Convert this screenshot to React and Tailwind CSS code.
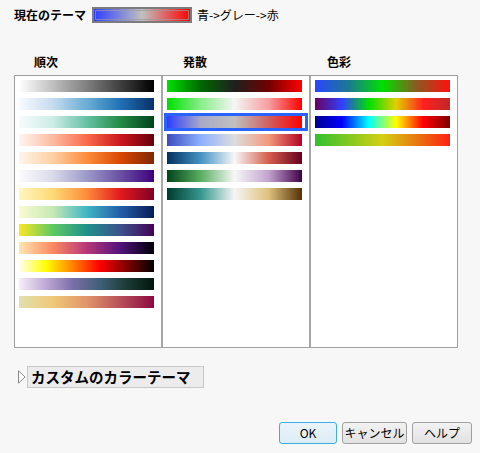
const SEQUENTIAL = [
  'linear-gradient(to right, #ffffff, #000000)',
  'linear-gradient(to right, #f7fbff, #c6dbef, #6baed6, #2171b5, #08306b)',
  'linear-gradient(to right, #f7fcfd, #ccece6, #66c2a4, #238b45, #00441b)',
  'linear-gradient(to right, #fff5f0, #fcbba1, #fb6a4a, #cb181d, #67000d)',
  'linear-gradient(to right, #fff5eb, #fdd0a2, #fd8d3c, #d94801, #7f2704)',
  'linear-gradient(to right, #fcfbfd, #dadaeb, #9e9ac8, #6a51a3, #3f007d)',
  'linear-gradient(to right, #fff6c0, #fed976, #fd8d3c, #e31a1c, #800026)',
  'linear-gradient(to right, #f8fcd0, #c7e9b4, #41b6c4, #225ea8, #081d58)',
  'linear-gradient(to right, #fde725, #5ec962, #21918c, #3b528b, #440154)',
  'linear-gradient(to right, #fee6b0, #fc8961, #b73779, #51127c, #000004)',
  'linear-gradient(to right, #fffff0, #ffff00, #ff8000, #ff0000, #800000, #000000)',
  'linear-gradient(to right, #f6eef8, #c0a8d6, #7a6ea8, #3f6078, #1c3a34, #02150e)',
  'linear-gradient(to right, #e0e0b0, #f0c878, #e0956a, #b85058, #8b0a40)',
]

const DIVERGING = [
  'linear-gradient(to right, #00e000, #006800, #202020, #700000, #ff0000)',
  'linear-gradient(to right, #00e000, #88ee88, #f5f5f5, #f5a0a0, #ff0000)',
  'linear-gradient(to right, #2e3fff, #a8a8c8, #c0c0c0, #d06060, #ff0000)',
  'linear-gradient(to right, #3b4cc0, #8db0fe, #dddddd, #f49a7b, #b40426)',
  'linear-gradient(to right, #053061, #4393c3, #f7f7f7, #d6604d, #67001f)',
  'linear-gradient(to right, #00441b, #5aae61, #f7f7f7, #c2a5cf, #40004b)',
  'linear-gradient(to right, #003c30, #35978f, #f5f5f5, #dfc27d, #543005)',
]

const COLORFUL = [
  'linear-gradient(to right, #2b45ff, #1a7a90, #00e000, #8a5a20, #ff1010)',
  'linear-gradient(to right, #6a0060, #3040ff, #00e000, #e0d000, #ff2020, #c02828)',
  'linear-gradient(to right, #00008f, #0000ff, #00ffff, #ffff00, #ff0000, #800000)',
  'linear-gradient(to right, #30c030, #d4d010, #ff2010)',
]

function Column({ bars, selected, border }) {
  return (
    <div
      className={`h-full pl-[4px] pt-[4px] flex flex-col gap-[6px] ${
        border ? 'w-[148px] border-r-2 border-[#a8a8a8]' : 'w-[146px]'
      }`}
    >
      {bars.map((g, i) => (
        <div key={i} className="relative w-[135px] h-[12px] shrink-0">
          {selected === i && (
            <span className="absolute left-[-3px] top-[-3px] w-[144px] h-[18px] border-[3px] border-[#2962ff]" />
          )}
          <div className="absolute inset-0" style={{ background: g }} />
        </div>
      ))}
    </div>
  )
}

function Button({ children, width, focused }) {
  return (
    <button
      className={`h-[22px] ${width} px-0 whitespace-nowrap rounded-[3px] border text-[12px] leading-none text-black bg-gradient-to-b ${
        focused ? 'border-[#3ab0e2] from-[#ebf4fa] to-[#dcecf6]' : 'border-[#a0a0a0] from-[#f2f2f2] to-[#e2e2e2]'
      }`}
    >
      {children}
    </button>
  )
}

export default function App() {
  return (
    <div
      className="w-[480px] h-[453px] bg-[#f7f7f7] text-black relative"
      style={{ fontFamily: '"Noto Sans CJK JP", "Noto Sans", sans-serif' }}
    >
      <div className="flex items-center pl-[14px] pt-[7px] h-[23px]">
        <span className="text-[12px] font-bold leading-none w-[78px]">現在のテーマ</span>
        <div className="w-[100px] h-[16px] border-2 border-[#7c7c7c] p-[1px] bg-[linear-gradient(to_right,#2e3fff,#c0c0c0,#ff0000)]">
          <div className="w-full h-full border border-[#9a9a9a]/70" />
        </div>
        <span className="text-[12px] leading-none ml-[5px]">青-&gt;グレー-&gt;赤</span>
      </div>

      <div className="ml-[14px] mt-[33px] flex text-[12px] font-bold leading-none h-[19px]">
        <div className="w-[148px] pl-[20px]">順次</div>
        <div className="w-[148px] pl-[21px]">発散</div>
        <div className="w-[148px] pl-[17px]">色彩</div>
      </div>

      <div className="ml-[14px] w-[444px] h-[273px] border border-[#a0a0a0] bg-white flex">
        <Column bars={SEQUENTIAL} border />
        <Column bars={DIVERGING} selected={2} border />
        <Column bars={COLORFUL} />
      </div>

      <div className="flex items-center ml-[18px] mt-[18px]">
        <svg width="8" height="14" viewBox="0 0 8 14" className="mr-[1px]">
          <path d="M0.5 0.8 L7 7 L0.5 13.2 Z" fill="white" stroke="#8a8a8a" strokeWidth="1" />
        </svg>
        <div className="w-[177px] h-[22px] bg-[#ececec] border border-[#c8c8c8] flex items-center pl-[3px]">
          <span className="text-[14.5px] font-bold leading-none">カスタムのカラーテーマ</span>
        </div>
      </div>

      <div className="absolute left-[279px] top-[422px] flex gap-[5px]">
        <Button width="w-[58px]" focused>OK</Button>
        <Button width="w-[65px]">キャンセル</Button>
        <Button width="w-[60px]">ヘルプ</Button>
      </div>
    </div>
  )
}
